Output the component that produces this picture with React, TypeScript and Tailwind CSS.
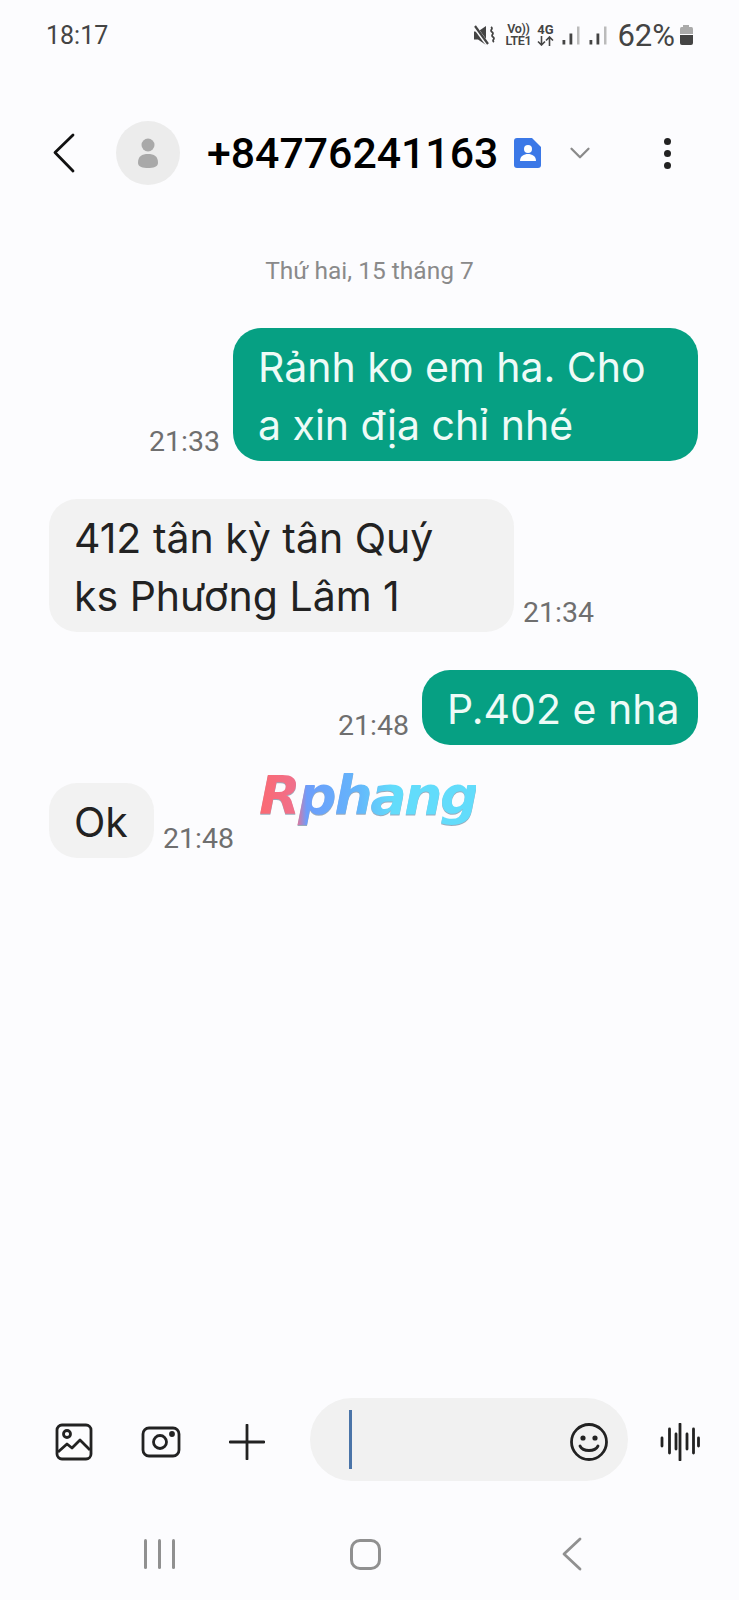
import { ChevronDown } from "lucide-react";

const messages = [
  { id: 1, mine: true, time: "21:33", lines: ["Rảnh ko em ha. Cho", "a xin địa chỉ nhé"], width: "w-[465px]" },
  { id: 2, mine: false, time: "21:34", lines: ["412 tân kỳ tân Quý", "ks Phương Lâm 1"], width: "w-[465px]" },
  { id: 3, mine: true, time: "21:48", lines: ["P.402 e nha"], width: "w-[276px]" },
  { id: 4, mine: false, time: "21:48", lines: ["Ok"], width: "w-[105px]" },
];

function Signal() {
  return (
    <svg width="19" height="19" viewBox="0 0 19 19">
      <rect x="0.500" y="14" width="2.800" height="4.500" fill="#444" />
      <rect x="7.500" y="7.500" width="2.800" height="11" fill="#444" />
      <rect x="15" y="0.500" width="2.500" height="18" fill="#bbb" />
    </svg>
  );
}

function StatusBar() {
  return (
    <div className="flex h-[70px] items-center justify-between pl-[46px] pr-[45px] text-[#444]">
      <span className="text-[25px] leading-none">18:17</span>
      <div className="flex items-center">
        <svg width="22" height="21" viewBox="0 0 22 21" className="mr-[9px]">
          <path d="M0 6.500h4L12 1v19l-8-5.500H0z" fill="#444" />
          <path d="M0 1l14 19" stroke="#fcfcfe" strokeWidth="4" />
          <path d="M1 1l13 18" stroke="#444" strokeWidth="2.200" />
          <path d="M17 2c3 2-2 3 1 5s-2 3 1 5-2 3 1 5" stroke="#444" strokeWidth="1.800" fill="none" />
        </svg>
        <div className="mr-[5px] flex w-[26px] flex-col items-center text-[12.500px] font-semibold leading-[12px] tracking-tight">
          <span>Vo))</span>
          <span>LTE1</span>
        </div>
        <div className="mr-[8px] flex w-[18px] flex-col items-center">
          <span className="text-[13px] font-bold leading-[12px]">4G</span>
          <svg width="17" height="10" viewBox="0 0 17 10" fill="none" stroke="#444" strokeWidth="1.600">
            <path d="M4.500 0v9M1 5.500l3.500 3.500L8 5.500M12.500 10V1M9 4.500 12.500 1 16 4.500" />
          </svg>
        </div>
        <div className="flex gap-[8px]">
          <Signal />
          <Signal />
        </div>
        <span className="ml-[9px] text-[31px] leading-none">62%</span>
        <svg width="15" height="22" viewBox="0 0 15 22" className="ml-[4px]">
          <path d="M4 1h6v2h2.500q1.500 0 1.500 2v5H1V5q0-2 1.500-2H4z" fill="#aaa" />
          <path d="M1 11h13v8q0 2-2 2H3q-2 0-2-2z" fill="#444" />
        </svg>
      </div>
    </div>
  );
}

function Header() {
  return (
    <div className="flex h-[84px] items-center mt-[-1px]">
      <svg width="24" height="40" viewBox="0 0 24 40" className="ml-[52px]">
        <path d="M21 2 3 19.500 21 38" stroke="#111" strokeWidth="2.800" fill="none" strokeLinecap="round" strokeLinejoin="round" />
      </svg>
      <div className="ml-[40px] flex h-[64px] w-[64px] items-center justify-center rounded-full bg-[#ececec]">
        <svg width="24" height="32" viewBox="0 0 24 32">
          <circle cx="12" cy="8" r="6.500" fill="#a9a9a9" />
          <path d="M2 26c0-7 4-9 10-9s10 2 10 9c0 4-5 5-10 5S2 30 2 26z" fill="#a9a9a9" />
        </svg>
      </div>
      <span className="ml-[27px] text-[42.800px] font-medium leading-none text-black">+84776241163</span>
      <svg width="28" height="32" viewBox="0 0 28 32" className="ml-[16px]">
        <path d="M3 1h15l9 9v18q0 3-3 3H3q-3 0-3-3V4q0-3 3-3z" fill="#3b78e7" />
        <circle cx="14" cy="12" r="4" fill="#fff" />
        <path d="M6 24c0-5 4-7 8-7s8 2 8 7z" fill="#fff" />
      </svg>
      <ChevronDown className="ml-[21px] text-[#8a8a8a]" size={34} strokeWidth={1.6} />
      <div className="ml-[67px] flex flex-col gap-[5px]">
        <span className="h-[7px] w-[7px] rounded-full bg-[#222]" />
        <span className="h-[7px] w-[7px] rounded-full bg-[#222]" />
        <span className="h-[7px] w-[7px] rounded-full bg-[#222]" />
      </div>
    </div>
  );
}

function Bubble({ mine, time, lines, width }: { mine: boolean; time: string; lines: string[]; width: string }) {
  const stamp = <span className="mb-[2px] text-[28.500px] leading-[34px] text-[#6f6f6f]">{time}</span>;
  return (
    <div className={mine ? "flex items-end justify-end gap-[13px]" : "flex items-end justify-start gap-[9px]"}>
      {mine && stamp}
      <div
        className={
          mine
            ? `${width} rounded-[28px] bg-[#06a083] pb-[7px] pl-[25px] pr-[20px] pt-[10px] text-[#eefbf7]`
            : `${width} rounded-[28px] bg-[#f2f2f2] pb-[7px] pl-[25px] pr-[20px] pt-[10px] text-[#222]`
        }
      >
        {lines.map((line) => (
          <div key={line} className="whitespace-nowrap font-['Inter',sans-serif] text-[41px] leading-[58px]">
            {line}
          </div>
        ))}
      </div>
      {!mine && stamp}
    </div>
  );
}

function InputBar() {
  return (
    <div className="flex h-[84px] items-center">
      <svg width="38" height="38" viewBox="0 0 38 38" fill="none" stroke="#222" strokeWidth="2.800" className="ml-[55px]">
        <rect x="2" y="2" width="34" height="34" rx="5" />
        <circle cx="12" cy="11" r="3.500" />
        <path d="M3 29l9-8 5 4 8-8 10 10" strokeLinejoin="round" />
      </svg>
      <svg width="40" height="32" viewBox="0 0 40 32" fill="none" stroke="#222" strokeWidth="2.800" className="ml-[48px]">
        <rect x="2" y="2" width="36" height="28" rx="6" />
        <circle cx="19" cy="16" r="6.500" />
        <circle cx="31" cy="8" r="1.500" fill="#222" />
      </svg>
      <svg width="36" height="36" viewBox="0 0 36 36" stroke="#222" strokeWidth="2.800" strokeLinecap="round" className="ml-[48px]">
        <path d="M18 1v34M1 18h34" />
      </svg>
      <div className="mb-[5px] ml-[45px] flex h-[83px] w-[318px] items-center rounded-full bg-[#f1f1f1] pl-[39px] pr-[20px]">
        <span className="h-[59px] w-[3px] bg-[#4a74a8]" />
        <svg width="38" height="38" viewBox="0 0 38 38" fill="none" stroke="#222" strokeWidth="2.800" strokeLinecap="round" className="ml-auto mt-[5px]">
          <circle cx="19" cy="19" r="17.500" />
          <circle cx="13" cy="15" r="1.200" fill="#222" />
          <circle cx="25" cy="15" r="1.200" fill="#222" />
          <path d="M10 23c3 6 15 6 18 0" />
        </svg>
      </div>
      <svg width="40" height="38" viewBox="0 0 40 38" stroke="#222" strokeWidth="2.800" strokeLinecap="round" className="ml-[32px]">
        <path d="M2 15v8M9.500 6v24M16 11v15M20 1v36M27 11v15M33.500 6v24M38.500 15v8" />
      </svg>
    </div>
  );
}

function NavBar() {
  return (
    <div className="flex h-[32px] items-center">
      <div className="ml-[144px] flex gap-[11px]">
        <span className="h-[30px] w-[3px] rounded-full bg-[#909090]" />
        <span className="h-[30px] w-[3px] rounded-full bg-[#909090]" />
        <span className="h-[30px] w-[3px] rounded-full bg-[#909090]" />
      </div>
      <span className="ml-[175px] h-[31px] w-[31px] rounded-[10px] border-[3px] border-[#909090]" />
      <svg width="20" height="34" viewBox="0 0 20 34" className="ml-[181px]">
        <path d="M18 2 2 17l16 15" stroke="#909090" strokeWidth="2.800" fill="none" strokeLinecap="round" strokeLinejoin="round" />
      </svg>
    </div>
  );
}

export default function App() {
  return (
    <div className="relative flex h-[1600px] w-[739px] flex-col overflow-hidden bg-[#fcfcfe] font-['Roboto',sans-serif]">
      <StatusBar />
      <div className="mt-[42px]">
        <Header />
      </div>
      <div className="mt-[61px] text-center text-[24.500px] leading-[30px] text-[#8a8a8a]">Thứ hai, 15 tháng 7</div>
      <div className="mt-[42px] flex flex-col gap-[38px] pl-[49px] pr-[41px]">
        {messages.map((m) => (
          <Bubble key={m.id} mine={m.mine} time={m.time} lines={m.lines} width={m.width} />
        ))}
      </div>
      <span className="absolute left-[259px] top-[761px] bg-[linear-gradient(90deg,#fb6a72_0%,#f0708c_17%,#6c9dfb_22%,#64b5fb_45%,#62dcfb_62%)] bg-clip-text font-['DejaVu_Sans',sans-serif] text-[54px] font-bold italic leading-[70px] tracking-[-2.500px] text-transparent drop-shadow-[0_1px_0_#9ab]">
        Rphang
      </span>
      <div className="mt-auto">
        <InputBar />
      </div>
      <div className="mb-[30px] mt-[54px]">
        <NavBar />
      </div>
    </div>
  );
}
